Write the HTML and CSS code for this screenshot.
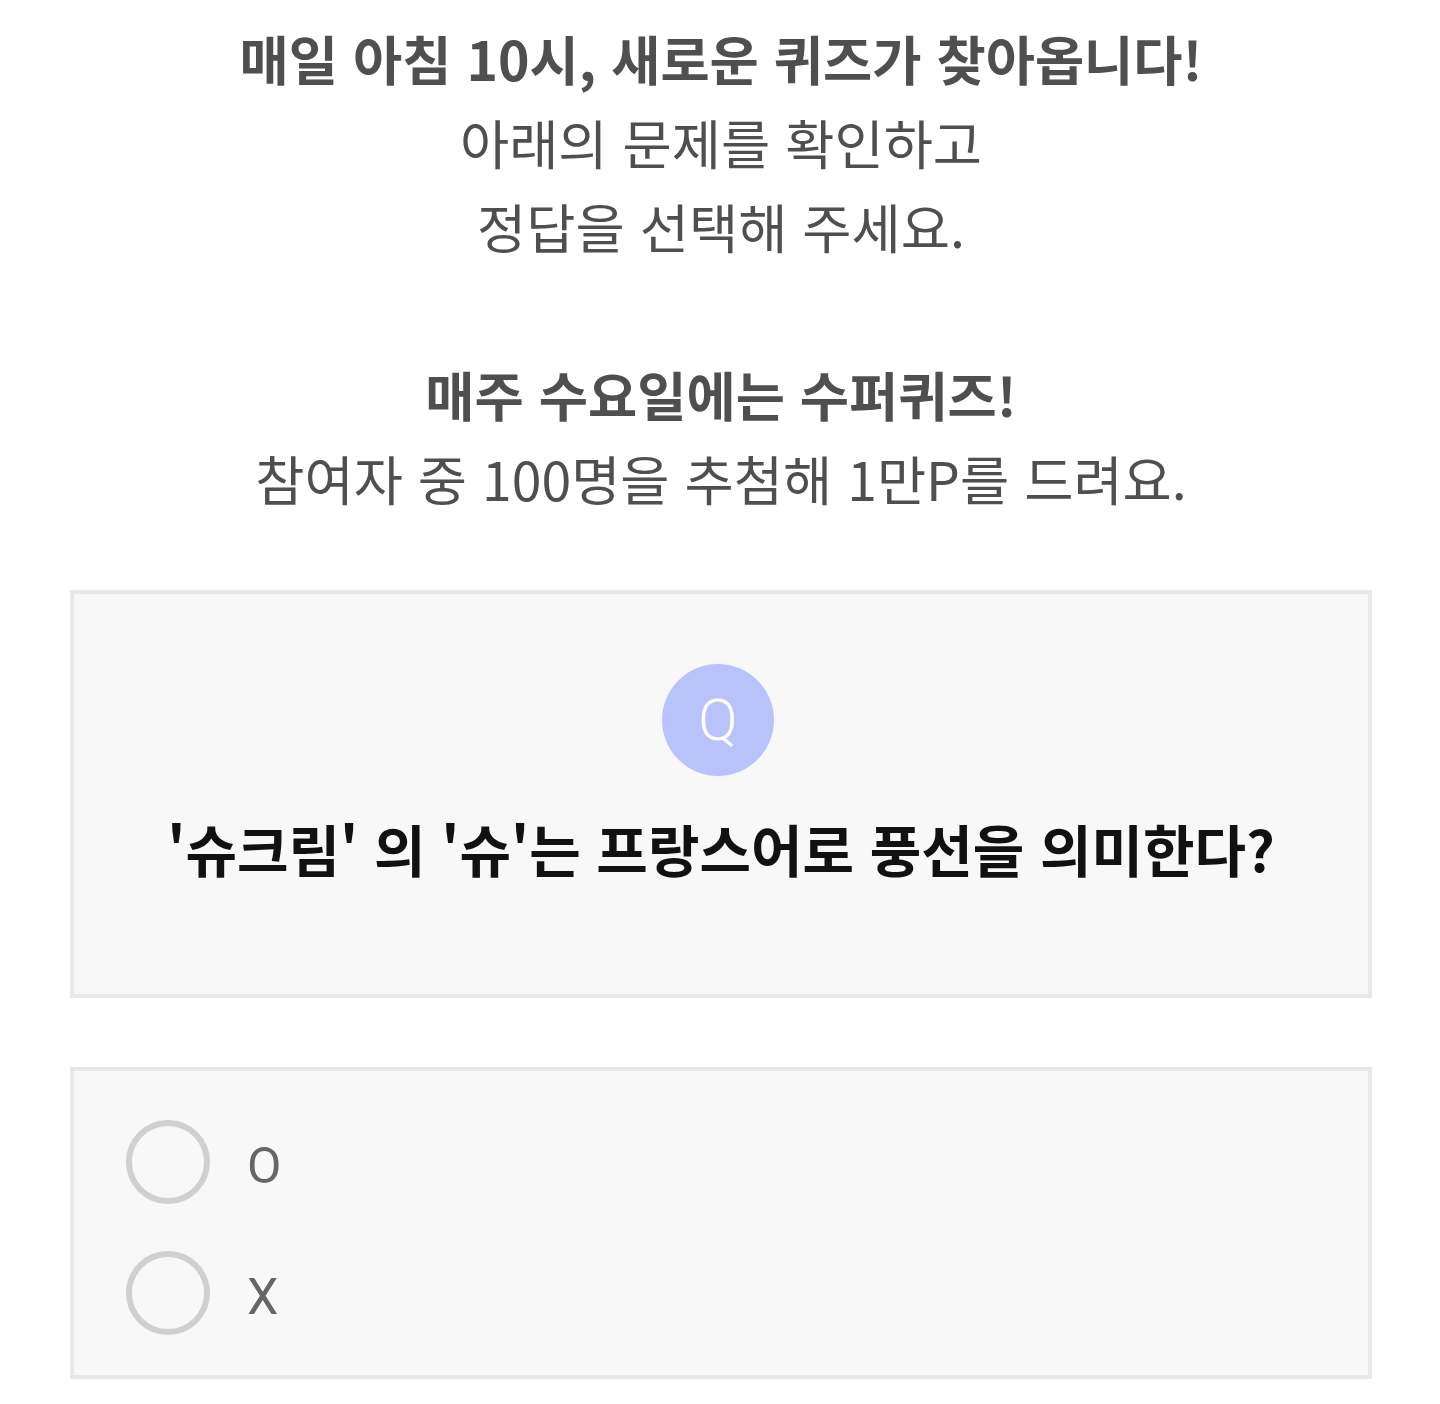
FILE: index.html
```html
<!DOCTYPE html>
<html lang="ko">
<head>
  <meta charset="UTF-8" />
  <meta name="viewport" content="width=device-width, initial-scale=1.0"/>
  <title>오늘의 퀴즈</title>
  <link rel="stylesheet" href="styles.css">
</head>
<body>

  <div id="intro">
    <p><strong>매일 아침 10시, 새로운 퀴즈가 찾아옵니다!</strong><br>
    아래의 문제를 확인하고<br>
    정답을 선택해 주세요.</p>
    <p><strong>매주 수요일에는 수퍼퀴즈!</strong><br>
    참여자 중 100명을 추첨해 1만P를 드려요.</p>
  </div>

  <div id="question">
    <div class="badge">Q</div>
    <h2>'슈크림' 의 '슈'는 프랑스어로 풍선을 의미한다?</h2>
  </div>

  <div id="answers">
    <label class="option"><input type="radio" name="answer" value="O"><span class="ring"></span><span class="text">O</span></label>
    <label class="option"><input type="radio" name="answer" value="X"><span class="ring"></span><span class="text">X</span></label>
  </div>

</body>
</html>
```

FILE: styles.css
```css
body { margin: 0; padding: 16px 68px 40px 70px; background: #fff; font-family: "Noto Sans CJK KR", "Noto Sans", sans-serif; }
#intro { text-align: center; color: #4f4f4f; font-size: 53.5px; line-height: 84px; }
#intro p { margin: 0 0 84px; }
#intro p:last-child { margin-bottom: 0; }
#intro strong { font-weight: 700; }
#question { margin-top: 70px; background: #f8f8f8; border: 4px solid #e8e8e8; padding: 70px 20px 106px; display: flex; flex-direction: column; align-items: center; }
.badge { width: 112px; height: 112px; margin-right: 6px; border-radius: 50%; background: #b9c3fb; color: #fff; font-family: Roboto, sans-serif; font-weight: 300; font-size: 58px; line-height: 112px; text-align: center; }
#question h2 { margin: 32px 0 0; font-size: 56px; line-height: 80px; font-weight: 700; color: #111; }
#answers { margin-top: 69px; background: #f8f8f8; border: 4px solid #e8e8e8; padding: 49px 52px 40px; display: flex; flex-direction: column; gap: 47px; }
.option { display: flex; align-items: center; gap: 37px; cursor: pointer; }
.option input { display: none; }
.ring { width: 72px; height: 72px; border: 6px solid #d0d0d0; border-radius: 50%; background: #f8f8f8; }
.option input:checked + .ring { border-color: #b9c3fb; }
.text { margin-top: 8px; font-family: Roboto, sans-serif; font-size: 50px; color: #666; line-height: 76px; }
```
